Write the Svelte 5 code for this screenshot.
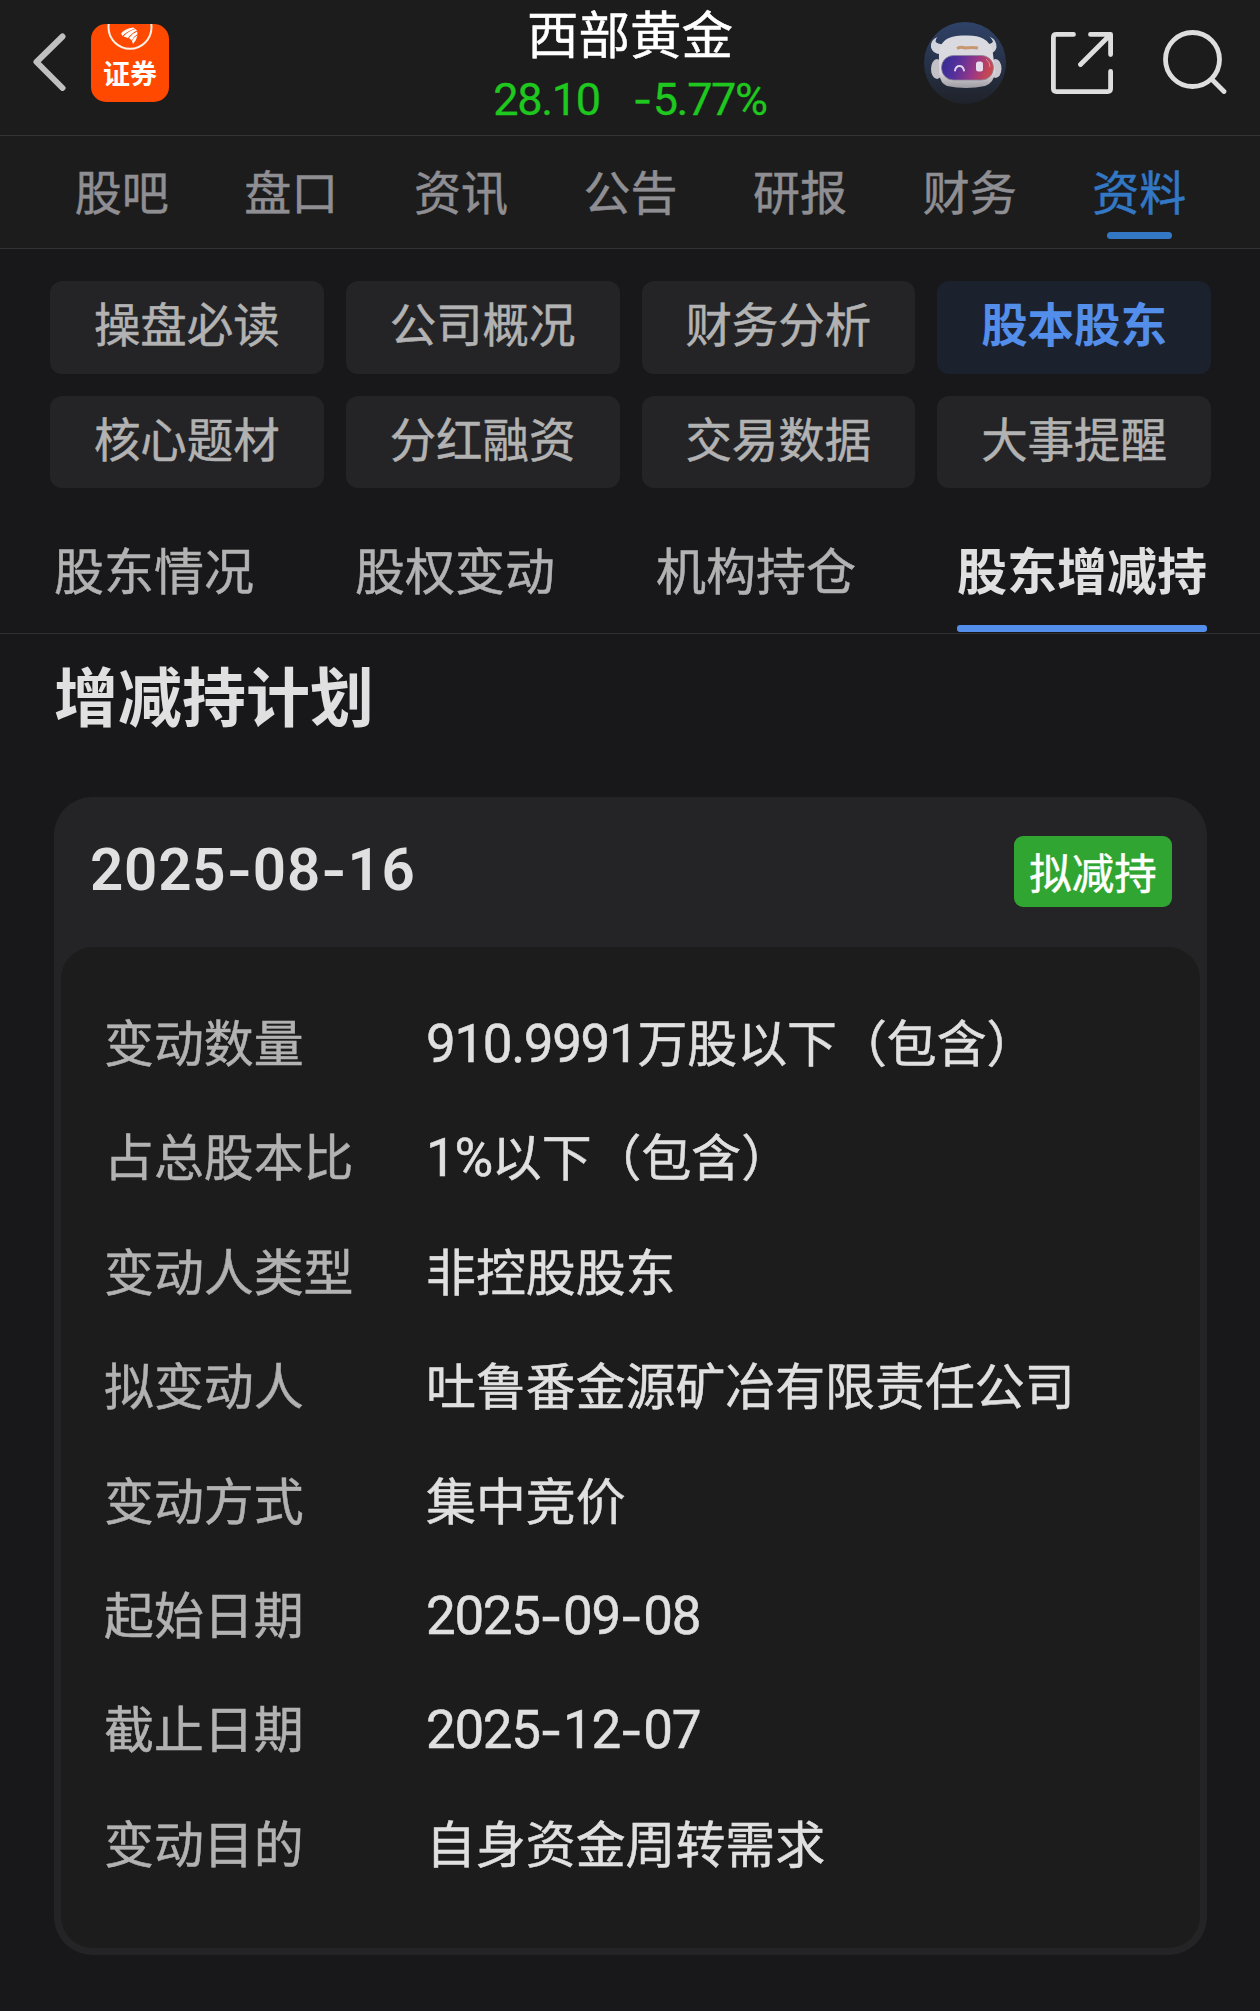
<script>
  const mainTabs = ['股吧', '盘口', '资讯', '公告', '研报', '财务', '资料'];
  const chips = ['操盘必读', '公司概况', '财务分析', '股本股东', '核心题材', '分红融资', '交易数据', '大事提醒'];
  const subTabs = ['股东情况', '股权变动', '机构持仓', '股东增减持'];
  const rows = [
    ['变动数量', '910.9991万股以下（包含）'],
    ['占总股本比', '1%以下（包含）'],
    ['变动人类型', '非控股股东'],
    ['拟变动人', '吐鲁番金源矿冶有限责任公司'],
    ['变动方式', '集中竞价'],
    ['起始日期', '2025-09-08'],
    ['截止日期', '2025-12-07'],
    ['变动目的', '自身资金周转需求'],
  ];

  // Splits a string into figures, dashes and Chinese runs so each gets its own face.
  function runs(text) {
    return text
      .split(/([0-9.%]+|-)/)
      .filter(Boolean)
      .map((t) => ({ t, kind: t === '-' ? 'dash' : /^[0-9.%]/.test(t) ? 'num' : 'han' }));
  }
</script>

{#snippet mixed(text)}{#each runs(text) as r}<span class={r.kind}>{r.t}</span>{/each}{/snippet}

<div class="screen">
  <header>
    <div class="left">
      <svg class="back" width="34" height="60" viewBox="0 0 34 60" fill="none" stroke="#c0c0c0" stroke-width="6">
        <path d="M30.500 5.500L4.500 31L30.500 57" stroke-linecap="round" stroke-linejoin="round" />
      </svg>
      <div class="logo">
        <svg width="78" height="34" viewBox="0 0 78 34" fill="none">
          <circle cx="39" cy="3.300" r="21.500" stroke="#fff0e8" stroke-width="2" />
          <g fill="#fff">
            <path d="M30 9.500Q34 4.500 42 3.500L44 4.500Q36 7 31.500 12Z" />
            <path d="M32.500 12.500Q37 7 44.500 5L46 6.500Q40 9.500 37 14Z" />
            <path d="M38 14Q41 9.500 46.200 7.500L46.500 10Q42.500 12.500 40.800 16.500Z" />
            <path d="M41 17Q43 13 46.500 11.300Q45.500 16.500 42 20Z" />
          </g>
        </svg>
        <span>证券</span>
      </div>
    </div>
    <div class="stock">
      <h1>西部黄金</h1>
      <div class="price"><span>{@render mixed('28.10')}</span><span>{@render mixed('-5.77%')}</span></div>
    </div>
    <div class="right">
      <svg width="82" height="82" viewBox="0 0 82 82">
        <defs>
          <linearGradient id="sky" x1="0" y1="0" x2="0" y2="1">
            <stop offset="0" stop-color="#2f4268" />
            <stop offset="1" stop-color="#1f2229" />
          </linearGradient>
          <linearGradient id="visor" x1="0" y1="0" x2="1" y2="0.15">
            <stop offset="0" stop-color="#2f2c92" />
            <stop offset="0.35" stop-color="#56309c" />
            <stop offset="0.7" stop-color="#9a3785" />
            <stop offset="1" stop-color="#c8484f" />
          </linearGradient>
          <linearGradient id="shell" x1="0" y1="0" x2="0" y2="1">
            <stop offset="0" stop-color="#d9dae0" />
            <stop offset="0.7" stop-color="#dcd9de" />
            <stop offset="1" stop-color="#9d9aa1" />
          </linearGradient>
        </defs>
        <circle cx="41" cy="41" r="41" fill="url(#sky)" />
        <path d="M13.500 15Q6 18 7 25.500Q9 33 19 32L22 22Q14 23 11.500 19.500Q11.500 17 13.500 15Z" fill="#d3d3db" />
        <path d="M65.500 14.500Q73 18 72.500 25.500Q71 32 63 32L60 22Q67 23 69 19.500Q68 17 65.500 14.500Z" fill="#d3d3db" />
        <ellipse cx="13" cy="47" rx="6" ry="10" fill="#c3c0c8" />
        <ellipse cx="71.500" cy="46.500" rx="6" ry="9.500" fill="#ccc8d0" />
        <path d="M15 38Q14 20 25 16Q31 13 41 13.500Q53 13 59 16.500Q69 21 69.500 36L71 50Q70 61 61 64Q42 68 23 64Q16 61 15.500 52Z" fill="url(#shell)" />
        <rect x="17.500" y="33.500" width="52" height="24.500" rx="12" fill="url(#visor)" stroke="#8c8498" stroke-width="0.800" />
        <path d="M33 26.500Q37 24.500 41 26Q48 25 54 26" fill="none" stroke="#c8976f" stroke-width="3" />
        <path d="M31 48.500Q32 44 35.500 44Q39 44 40 48.500" fill="none" stroke="#d9d4ee" stroke-width="2" stroke-linecap="round" />
        <rect x="52" y="39.500" width="7" height="10" rx="2.500" fill="#e6dcee" />
        <path d="M62 37Q66 40 66 45" fill="none" stroke="#dc8ba0" stroke-width="1" />
      </svg>
      <svg class="share" width="62" height="62" viewBox="0 0 62 62" fill="none" stroke="#dedede" stroke-width="4.800" stroke-linecap="round" stroke-linejoin="round">
        <path d="M22.500 2.400H5.400Q2.400 2.400 2.400 5.400V56.600Q2.400 59.600 5.400 59.600H56.600Q59.600 59.600 59.600 56.600V39.400" />
        <path d="M39.500 2.400H59.600V22.500M59 3L29.500 32.500" />
      </svg>
      <svg class="search" width="64" height="64" viewBox="0 0 64 64" fill="none" stroke="#dedede" stroke-width="4.800" stroke-linecap="round">
        <circle cx="29.500" cy="29.500" r="27" />
        <path d="M49.500 50L61 61.500" />
      </svg>
    </div>
  </header>

  <nav class="main-tabs">
    {#each mainTabs as tab}
      <div class="tab" class:active={tab === '资料'}><span>{tab}</span></div>
    {/each}
  </nav>

  <div class="chips">
    {#each chips as chip}
      <div class="chip" class:active={chip === '股本股东'}>{chip}</div>
    {/each}
  </div>

  <nav class="sub-tabs">
    {#each subTabs as tab}
      <div class="sub" class:active={tab === '股东增减持'}>{tab}</div>
    {/each}
  </nav>

  <h2>增减持计划</h2>

  <section class="card">
    <div class="card-head">
      <div class="date">{@render mixed('2025-08-16')}</div>
      <div class="badge">拟减持</div>
    </div>
    <dl>
      {#each rows as [label, value]}
        <div class="row">
          <dt>{label}</dt>
          <dd>{@render mixed(value)}</dd>
        </div>
      {/each}
    </dl>
  </section>
</div>

<style>
  :global(body) {
    background: #18181a;
  }
  .screen {
    box-sizing: border-box;
    width: 1260px;
    height: 2011px;
    background: #18181a;
    font-family: 'Noto Sans CJK SC', sans-serif;
    color: #e0e0e0;
    white-space: nowrap;
  }
  h1, h2, dl, dt, dd {
    margin: 0;
    font-weight: 400;
  }
  h1, .tab, .chip, .sub, .badge, dt, dd {
    -webkit-text-stroke: 0.5px currentColor;
  }
  .chip.active, .sub.active {
    -webkit-text-stroke: 0;
  }
  .num {
    font-family: Roboto, sans-serif;
    font-size: 1.06em;
    letter-spacing: -0.025em;
    line-height: 1;
  }
  .dash {
    font-family: Inter, sans-serif;
    line-height: 1;
    letter-spacing: 0.010em;
  }

  header {
    box-sizing: border-box;
    height: 136px;
    display: grid;
    grid-template-columns: 1fr auto 1fr;
    background: #1c1c1c;
    border-bottom: 1px solid #333;
  }
  .left {
    display: flex;
    align-items: flex-start;
    padding: 24px 0 0 32px;
  }
  .back {
    margin: 7px 25px 0 0;
  }
  .logo {
    width: 78px;
    height: 78px;
    border-radius: 15px;
    background: #ff4900;
    overflow: hidden;
    display: flex;
    flex-direction: column;
    align-items: center;
  }
  .logo span {
    font: 700 27px/30px 'Noto Sans CJK SC', sans-serif;
    color: #fff;
  }
  .stock {
    display: flex;
    flex-direction: column;
    align-items: center;
  }
  h1 {
    font-family: 'Liberation Sans', 'Noto Sans CJK SC', sans-serif;
    font-size: 51.500px;
    line-height: 73px;
    color: #fff;
  }
  .price {
    display: flex;
    gap: 33px;
    font-size: 42.500px;
    line-height: 48px;
    color: #1ec81e;
    -webkit-text-stroke: 0.3px currentColor;
  }
  .price .num {
    letter-spacing: -0.030em;
  }
  .right {
    display: flex;
    justify-content: flex-end;
    align-items: flex-start;
    padding: 22px 33px 0 0;
  }
  .share {
    margin: 10px 50px 0 45px;
  }
  .search {
    margin-top: 8px;
  }

  .main-tabs {
    box-sizing: border-box;
    height: 113px;
    padding: 0 36px 0 37px;
    display: flex;
    background: #1c1c1c;
    border-bottom: 1px solid #333;
  }
  .tab {
    flex: 1;
    display: flex;
    flex-direction: column;
    align-items: center;
    font-size: 47px;
    padding-top: 6px;
    color: #8e8e93;
  }
  .tab.active {
    color: #3378c4;
  }
  .tab span {
    height: 90px;
    line-height: 96px;
  }
  .tab.active::after {
    content: '';
    width: 65px;
    height: 7px;
    border-radius: 4px;
    background: #3378c4;
  }

  .chips {
    padding: 32px 49px 0 50px;
    display: grid;
    grid-template-columns: repeat(4, 1fr);
    grid-template-rows: 93px 92px;
    gap: 22px;
  }
  .chip {
    border-radius: 12px;
    background: #242426;
    color: #b2b2b2;
    font-size: 46.500px;
    line-height: 82px;
    text-align: center;
  }
  .chip.active {
    background: #1c212e;
    color: #528eea;
    font-weight: 700;
  }

  .sub-tabs {
    box-sizing: border-box;
    height: 146px;
    padding: 0 53px 0 54px;
    display: flex;
    justify-content: space-between;
    border-bottom: 1px solid #303032;
  }
  .sub {
    display: flex;
    flex-direction: column;
    justify-content: space-between;
    padding-top: 30px;
    font-size: 50px;
    line-height: 100px;
    color: #b2b2b2;
  }
  .sub.active {
    color: #e0e0e0;
    font-weight: 700;
  }
  .sub.active::after {
    content: '';
    height: 7px;
    margin-bottom: 1px;
    border-radius: 3px;
    background: #528eea;
  }

  h2 {
    padding-left: 54px;
    height: 163px;
    font-size: 64px;
    line-height: 118px;
    font-weight: 700;
  }

  .card {
    box-sizing: border-box;
    margin: 0 53px 0 54px;
    height: 1158px;
    padding: 0 7px 7px;
    border-radius: 38px;
    background: #242426;
    display: flex;
    flex-direction: column;
  }
  .card-head {
    box-sizing: border-box;
    height: 150px;
    padding: 0 28px 2px 29px;
    display: flex;
    align-items: center;
    justify-content: space-between;
  }
  .date {
    height: 100px;
    font-size: 55px;
    font-weight: 600;
    line-height: 91px;
  }
  .date .num, .date .dash {
    letter-spacing: 0.014em;
  }
  .date .num {
    font-weight: 600;
  }
  .badge {
    width: 158px;
    height: 71px;
    border-radius: 9px;
    background: #31a531;
    color: #fff;
    font-size: 42.500px;
    line-height: 69px;
    text-align: center;
  }
  dl {
    flex: 1;
    padding: 36px 0 0 43px;
    border-radius: 32px;
    background: #1c1c1c;
  }
  .row {
    display: grid;
    grid-template-columns: 322px 1fr;
    height: 114.400px;
    line-height: 114px;
    font-size: 49.900px;
  }
  dt {
    color: #b2b2b2;
  }
</style>
